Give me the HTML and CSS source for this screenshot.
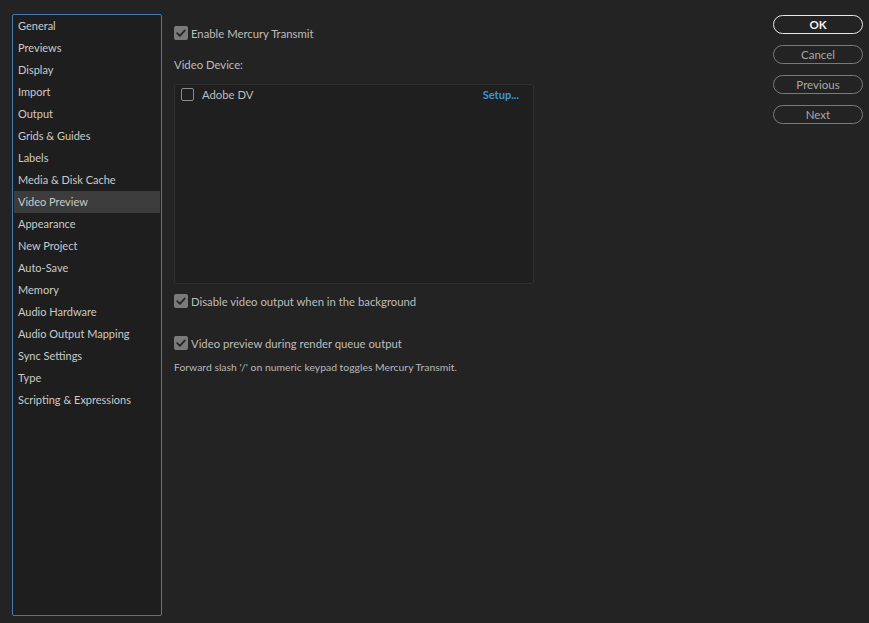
FILE: index.html
```html
<!DOCTYPE html>
<html>
<head>
<meta charset="utf-8">
<link rel="stylesheet" href="styles.css">
</head>
<body>
<div class="app">
  <nav class="sidebar">
    <div class="item">General</div>
    <div class="item">Previews</div>
    <div class="item">Display</div>
    <div class="item">Import</div>
    <div class="item">Output</div>
    <div class="item">Grids &amp; Guides</div>
    <div class="item">Labels</div>
    <div class="item">Media &amp; Disk Cache</div>
    <div class="item selected">Video Preview</div>
    <div class="item">Appearance</div>
    <div class="item">New Project</div>
    <div class="item">Auto-Save</div>
    <div class="item">Memory</div>
    <div class="item">Audio Hardware</div>
    <div class="item">Audio Output Mapping</div>
    <div class="item">Sync Settings</div>
    <div class="item">Type</div>
    <div class="item">Scripting &amp; Expressions</div>
  </nav>
  <main class="content">
    <label class="check row-enable"><span class="box checked"><svg viewBox="0 0 14 14"><path d="M3.2 7.2 L5.9 9.8 L10.8 4.4" /></svg></span>Enable Mercury Transmit</label>
    <div class="label-device">Video Device:</div>
    <div class="device-list">
      <div class="device-row">
        <label class="check"><span class="box empty"></span>Adobe DV</label>
        <span class="setup">Setup...</span>
      </div>
    </div>
    <label class="check row-disable"><span class="box checked"><svg viewBox="0 0 14 14"><path d="M3.2 7.2 L5.9 9.8 L10.8 4.4" /></svg></span>Disable video output when in the background</label>
    <label class="check row-render"><span class="box checked"><svg viewBox="0 0 14 14"><path d="M3.2 7.2 L5.9 9.8 L10.8 4.4" /></svg></span>Video preview during render queue output</label>
    <div class="note">Forward slash '/' on numeric keypad toggles Mercury Transmit.</div>
  </main>
  <aside class="buttons">
    <button class="btn primary">OK</button>
    <button class="btn">Cancel</button>
    <button class="btn">Previous</button>
    <button class="btn">Next</button>
  </aside>
</div>
</body>
</html>
```
FILE: styles.css
```css
html, body {
  margin: 0;
  padding: 0;
  background: #232323;
  height: 100%;
}
body {
  font-family: Lato, "Open Sans", sans-serif;
  font-size: 11.3px;
  color: #c6c6c6;
}
.app {
  display: flex;
  height: 623px;
  padding: 14px 0 0 12px;
  box-sizing: border-box;
}
.sidebar {
  width: 150px;
  height: 602px;
  box-sizing: border-box;
  border: 1px solid #4679b0;
  border-radius: 2px;
  background: #1e1e1e;
  padding-top: 0;
  flex: none;
}
.item {
  height: 22px;
  line-height: 22px;
  padding-left: 4px;
  margin: 0 1px;
  font-size: 11px;
  color: #cacaca;
  white-space: nowrap;
}
.item.selected {
  background: #3c3c3c;
}
.content {
  margin-left: 12px;
  width: 360px;
  display: flex;
  flex-direction: column;
  align-items: flex-start;
  padding-top: 12px;
}
.check {
  display: flex;
  align-items: center;
  color: #bdbdbd;
  white-space: nowrap;
}
.box {
  width: 14px;
  height: 14px;
  box-sizing: border-box;
  border-radius: 2px;
  margin-right: 3px;
  flex: none;
  display: flex;
}
.box.checked {
  background: #7a7a7a;
}
.box.checked svg {
  width: 14px;
  height: 14px;
}
.box.checked path {
  fill: none;
  stroke: #262626;
  stroke-width: 1.8;
  stroke-linecap: round;
  stroke-linejoin: round;
}
.box.empty {
  border: 1.5px solid #8a8a8a;
  width: 13px;
  height: 13px;
  margin-right: 8px;
}
.row-enable { height: 14px; }
.label-device {
  margin-top: 18px;
  height: 14px;
  line-height: 14px;
  color: #bdbdbd;
}
.device-list {
  margin-top: 12px;
  width: 360px;
  height: 200px;
  box-sizing: border-box;
  background: #1f1f1f;
  border: 1px solid #303030;
  border-radius: 2px;
  padding: 1px 14px 0 6px;
}
.device-row {
  display: flex;
  justify-content: space-between;
  align-items: center;
  height: 16px;
}
.setup {
  color: #3d94dc;
  font-weight: bold;
  font-size: 11px;
}
.row-disable {
  margin-top: 10px;
  height: 14px;
}
.row-render {
  margin-top: 28px;
  height: 14px;
}
.note {
  margin-top: 11px;
  font-size: 10.4px;
  color: #b8b8b8;
  white-space: nowrap;
}
.buttons {
  margin-left: auto;
  margin-right: 6px;
  padding-top: 1px;
  display: flex;
  flex-direction: column;
  gap: 11px;
}
.btn {
  width: 90px;
  height: 19px;
  box-sizing: border-box;
  border-radius: 10px;
  border: 1px solid #7a7a7a;
  background: transparent;
  color: #a8a8a8;
  font-family: Lato, "Open Sans", sans-serif;
  font-size: 11.5px;
  padding: 0;
  line-height: 17px;
}
.btn.primary {
  border: 1.5px solid #e8e8e8;
  color: #f2f2f2;
  font-weight: bold;
  line-height: 16px;
}
```
